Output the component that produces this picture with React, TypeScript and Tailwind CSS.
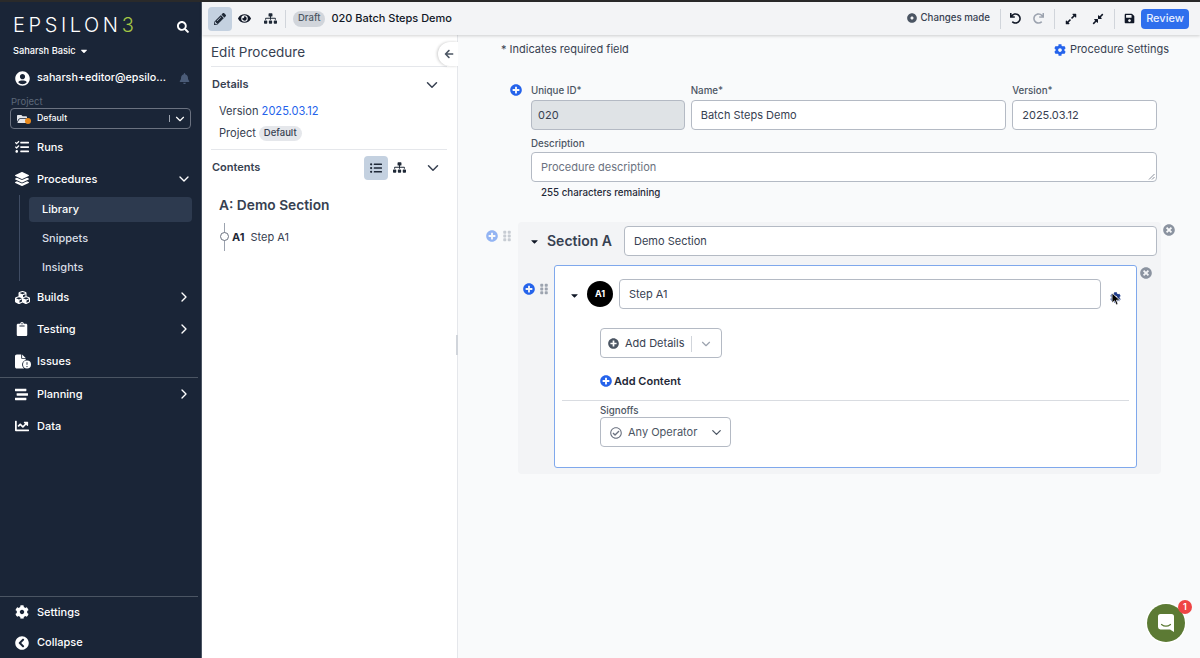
import React from "react";
import { FaSearch, FaCaretDown, FaUserCircle, FaBell, FaFolderOpen, FaTasks, FaLayerGroup, FaCubes, FaClipboard, FaStream, FaChartLine, FaCog, FaChevronCircleLeft, FaPencilAlt, FaEye, FaSitemap, FaDotCircle, FaUndo, FaRedo, FaExpandAlt, FaCompressAlt, FaSave, FaListUl, FaArrowLeft, FaPlusCircle, FaTimesCircle, FaGripVertical, FaRegCheckCircle } from "react-icons/fa";
import { FaFileCircleExclamation } from "react-icons/fa6";
import { FiChevronDown, FiChevronRight } from "react-icons/fi";

function NavRow({ icon, label, chev, h = "h-8" }: { icon: React.ReactNode; label: string; chev?: "down" | "right"; h?: string }) {
  return (
    <div className={`flex ${h} items-center pl-[15px] pr-[9px] text-white`}>
      <span className="flex w-[22px] items-center">{icon}</span>
      <span className="flex-1 text-[11px] font-medium">{label}</span>
      {chev === "down" && <FiChevronDown className="h-[16px] w-[16px]" />}
      {chev === "right" && <FiChevronRight className="h-[16px] w-[16px]" />}
    </div>
  );
}

function Sidebar() {
  return (
    <aside className="flex w-[202px] shrink-0 flex-col border-r border-[#4b5563] bg-[#1a2537] text-white">
      <div className="flex h-[36px] items-end justify-between pl-[13px] pr-[12px]">
        <span className="text-[20px] font-light leading-[25px] tracking-[3.6px]">
          EPSILON<span className="text-[#a3c644]">3</span>
        </span>
        <FaSearch className="mb-[5px] h-[12px] w-[12px]" />
      </div>
      <div className="mt-[5px] flex h-[16px] items-center gap-[3px] pl-[13px] text-[9.25px] font-medium">
        Saharsh Basic <FaCaretDown className="h-[10px] w-[10px]" />
      </div>
      <div className="mt-[3px] flex h-[32px] items-center pl-[15px] pr-[11px]">
        <FaUserCircle className="h-[15px] w-[15px]" />
        <span className="ml-[7px] flex-1 text-[10.75px] font-medium">saharsh+editor@epsilo...</span>
        <FaBell className="h-[11px] w-[11px] text-[#4b5c78]" />
      </div>
      <div className="mt-[2px] pl-[11px] text-[9.5px] leading-[12px] text-[#5c6778]">Project</div>
      <div className="mx-[10px] flex h-[21px] items-center rounded border border-[#6b7280] pl-[6px] pr-[3px]">
        <span className="relative flex w-[20px] items-center">
          <FaFolderOpen className="h-[12px] w-[12px] text-[#e5e7eb]" />
          <span className="absolute left-[8px] top-[5px] h-[6px] w-[6px] rounded-full bg-[#ea8a1c]" />
        </span>
        <span className="flex-1 text-[8.75px] font-medium">Default</span>
        <span className="mr-[3px] h-[7px] w-px bg-[#9ca3af]" />
        <FiChevronDown className="h-[14px] w-[14px]" />
      </div>
      <div className="mt-[2px]">
        <NavRow icon={<FaTasks className="h-[14px] w-[14px]" />} label="Runs" />
        <NavRow icon={<FaLayerGroup className="h-[14px] w-[14px]" />} label="Procedures" chev="down" />
        <div className="ml-[19px] h-[86px] border-l border-[#3f4c63] pl-[9px] pr-[9px] pt-[2px] text-[11px] font-medium text-[#d8dde5]">
          <div className="flex h-[25px] items-center rounded bg-[#2d3a4f] pl-[13px] text-white">Library</div>
          <div className="flex h-[32px] items-center pl-[13px]">Snippets</div>
          <div className="flex h-[27px] items-center pl-[13px]">Insights</div>
        </div>
        <NavRow icon={<FaCubes className="h-[15px] w-[15px]" />} label="Builds" chev="right" />
        <NavRow icon={<FaClipboard className="ml-[1px] h-[14px] w-[12px]" />} label="Testing" chev="right" />
        <NavRow icon={<FaFileCircleExclamation className="h-[15px] w-[16px]" />} label="Issues" />
        <div className="mr-[3px] h-px bg-[#4b5563]" />
        <NavRow icon={<FaStream className="h-[13px] w-[13px]" />} label="Planning" chev="right" />
        <NavRow icon={<FaChartLine className="h-[14px] w-[14px]" />} label="Data" />
      </div>
      <div className="mt-auto mr-[3px] h-px bg-[#4b5563]" />
      <NavRow h="h-[30px]" icon={<FaCog className="h-[14px] w-[14px]" />} label="Settings" />
      <NavRow h="h-[31px]" icon={<FaChevronCircleLeft className="h-[14px] w-[14px]" />} label="Collapse" />
    </aside>
  );
}

function TopBar() {
  return (
    <header className="relative z-10 flex h-[33px] shrink-0 items-center bg-[#f3f4f6] pl-[6px] pr-[11px] text-[#111827] shadow-[0_1px_3px_rgba(0,0,0,0.18)]">
      <span className="flex h-[24px] w-[24px] items-center justify-center rounded bg-[#c4d1e0]">
        <FaPencilAlt className="h-[12px] w-[12px] text-[#1f2937]" />
      </span>
      <span className="ml-[4px] flex w-[16px] justify-center"><FaEye className="h-[13px] w-[13px]" /></span>
      <span className="ml-[10px] flex w-[16px] justify-center"><FaSitemap className="h-[13px] w-[13px] text-[#1f2937]" /></span>
      <span className="ml-[7px] h-[18px] w-px bg-[#d1d5db]" />
      <span className="ml-[7px] flex h-[16px] items-center rounded-full bg-[#d1d5db] px-[5px] text-[9.5px] font-medium text-[#4b5563]">Draft</span>
      <span className="ml-[6px] text-[11px] font-medium">020 Batch Steps Demo</span>
      <span className="ml-auto flex items-center gap-[3px] text-[9.7px] font-medium text-[#374151]">
        <FaDotCircle className="h-[10px] w-[10px] text-[#4b5563]" /> Changes made
      </span>
      <span className="ml-[10px] h-[20px] w-px bg-[#d1d5db]" />
      <FaUndo className="ml-[9px] h-[11px] w-[11px] text-[#111827]" />
      <FaRedo className="ml-[12px] h-[11px] w-[11px] text-[#9ca3af]" />
      <span className="ml-[10px] h-[20px] w-px bg-[#d1d5db]" />
      <FaExpandAlt className="ml-[10px] h-[12px] w-[12px] text-[#111827]" />
      <FaCompressAlt className="ml-[15px] h-[12px] w-[12px] text-[#111827]" />
      <span className="ml-[10px] h-[20px] w-px bg-[#d1d5db]" />
      <FaSave className="ml-[9px] h-[11px] w-[11px] text-[#111827]" />
      <span className="ml-[6px] flex h-[20px] w-[48px] items-center justify-center rounded bg-[#2f6fed] text-[11px] font-medium text-[#e8f0ff]">Review</span>
    </header>
  );
}

function EditPanel() {
  return (
    <section className="relative flex w-[256px] shrink-0 flex-col border-r border-[#e5e7eb] bg-white pl-[9px] pr-[10px] text-[#1f2937]">
      <div className="flex h-[32px] items-end border-b border-[#e5e7eb] pb-[4px] text-[13.5px] leading-[20px] text-[#374151]">Edit Procedure</div>
      <div className="flex h-[35px] items-center justify-between pl-[1px] pr-[6px] text-[11px] font-semibold text-[#374151]">
        Details <FiChevronDown className="h-[18px] w-[18px] text-[#374151]" />
      </div>
      <div className="pl-[8px] text-[11.1px] leading-[22px] text-[#374151]">
        <div className="mt-[-2px]">Version <span className="text-[#2563eb]">2025.03.12</span></div>
        <div className="flex items-center gap-[3px]">
          Project <span className="flex h-[15px] items-center rounded-full bg-[#e5e7eb] px-[5px] text-[9.5px] font-medium">Default</span>
        </div>
      </div>
      <div className="mt-[5px] h-px bg-[#e5e7eb]" />
      <div className="flex h-[35px] items-center pl-[1px] pr-[5px] text-[11px] font-semibold text-[#374151]">
        <span className="flex-1">Contents</span>
        <span className="flex h-[24px] w-[24px] items-center justify-center rounded bg-[#c4d1e0]"><FaListUl className="h-[12px] w-[12px] text-[#1f2937]" /></span>
        <span className="ml-[5px] flex w-[13px] justify-center"><FaSitemap className="h-[13px] w-[13px] text-[#1f2937]" /></span>
        <FiChevronDown className="ml-[18px] h-[18px] w-[18px]" />
      </div>
      <div className="mt-[10px] pl-[8px] text-[13.75px] font-semibold leading-[20px] text-[#374151]">A: Demo Section</div>
      <div className="relative mt-[8px] flex h-[28px] items-center pl-[21px] text-[11px] text-[#374151]">
        <span className="absolute left-[13px] top-0 h-[28px] w-px bg-[#9ca3af]" />
        <span className="absolute left-[9px] top-[9px] h-[9px] w-[9px] rounded-full border border-[#6b7280] bg-white" />
        <b className="mr-[6px] font-bold text-[#1f2937]">A1</b> Step A1
      </div>
      <span className="absolute right-[-1px] top-[7px] flex h-[24px] w-[20px] items-center justify-center rounded-l-full bg-white shadow-[-1px_0_3px_rgba(0,0,0,0.2)]">
        <FaArrowLeft className="ml-[2px] h-[10px] w-[10px] text-[#4b5563]" />
      </span>
      <span className="absolute right-[-2px] top-[300px] h-[20px] w-[3px] bg-[#d1d5db]" />
    </section>
  );
}

const inputCls = "flex h-[30px] items-center rounded border border-[#b4bac4] bg-white px-[9px] pt-[1px] text-[11px] text-[#374151]";

function Plus({ faded }: { faded?: boolean }) {
  return <FaPlusCircle className={`h-[12px] w-[12px] ${faded ? "text-[#93b4f3]" : "text-[#2563eb]"}`} />;
}

function MainPane() {
  return (
    <main className="relative min-w-0 flex-1 bg-[#f9fafb]">
      <div className="flex h-[28px] items-center justify-between pl-[43px] pr-[31px] pt-[1px] text-[11px] text-[#374151]">
        <span>* Indicates required field</span>
        <span className="flex items-center gap-[4px]"><FaCog className="h-[12px] w-[12px] text-[#2563eb]" /> Procedure Settings</span>
      </div>
      <div className="relative ml-[73px] mt-[22px] w-[626px]">
        <span className="absolute left-[-21px] top-[-1px]"><Plus /></span>
        <div className="flex gap-[6px]">
          <div className="w-[154px]">
            <div className="mb-[3px] text-[9.75px] font-medium leading-[12px] text-[#4b5563]">Unique ID*</div>
            <div className={`${inputCls} !bg-[#dfe3e6] !px-[6px]`}>020</div>
          </div>
          <div className="w-[316px]">
            <div className="mb-[3px] text-[9.75px] font-medium leading-[12px] text-[#4b5563]">Name*</div>
            <div className={inputCls}>Batch Steps Demo</div>
          </div>
          <div className="w-[145px]">
            <div className="mb-[3px] text-[9.75px] font-medium leading-[12px] text-[#4b5563]">Version*</div>
            <div className={inputCls}>2025.03.12</div>
          </div>
        </div>
        <div className="mb-[2px] mt-[8px] text-[9.75px] font-medium leading-[12px] text-[#4b5563]">Description</div>
        <div className={`${inputCls} relative !text-[#6b7280]`}>Procedure description
          <svg className="absolute bottom-[1px] right-[1px] h-[7px] w-[7px]" viewBox="0 0 7 7"><path d="M6.5 1 1 6.5M6.5 4 4 6.5" stroke="#6b7280" strokeWidth="0.8" /></svg>
        </div>
        <div className="mt-[5px] pl-[10px] text-[9.75px] font-medium leading-[12px] text-[#1f2937]">255 characters remaining</div>
      </div>

      <div className="relative ml-[60px] mt-[23px] w-[643px] rounded bg-[#f3f4f6] pb-[6px] pt-[4px]">
        <span className="absolute left-[-32px] top-[8px] flex items-center gap-[4px]">
          <Plus faded /><FaGripVertical className="h-[12px] w-[10px] text-[#c7ccd3]" />
        </span>
        <FaTimesCircle className="absolute right-[-14px] top-[2px] h-[12px] w-[12px] text-[#8b93a0]" />
        <div className="flex items-center pr-[4px]">
          <FaCaretDown className="ml-[11px] h-[11px] w-[11px] text-[#111827]" />
          <span className="ml-[7px] w-[77px] pb-[1px] text-[14px] font-semibold text-[#374151]">Section A</span>
          <div className={`${inputCls} flex-1`}>Demo Section</div>
        </div>
        <div className="relative ml-[36px] mt-[9px] h-[203px] w-[583px] rounded-[3px] border-[1.5px] border-[#7fa8ec] bg-white pt-[13px]">
          <span className="absolute left-[-32px] top-[17px] flex items-center gap-[4px]">
            <Plus /><FaGripVertical className="h-[12px] w-[10px] text-[#9ca3af]" />
          </span>
          <FaTimesCircle className="absolute right-[-16px] top-[1px] h-[12px] w-[12px] text-[#8b93a0]" />
          <div className="flex items-center">
            <FaCaretDown className="ml-[14px] mt-[2px] h-[11px] w-[11px] text-[#111827]" />
            <span className="ml-[7px] flex h-[26px] w-[26px] items-center justify-center rounded-full bg-black text-[9px] font-bold text-white">A1</span>
            <div className={`${inputCls} ml-[6px] w-[482px]`}>Step A1</div>
            <span className="relative ml-[9px] mt-[6px]">
              <FaCog className="h-[11px] w-[11px] text-[#1e3a8a]" />
              <svg className="absolute left-[1px] top-[0px] h-[14px] w-[10px]" viewBox="0 0 10 14"><path d="M1 1v10l2.6-2.2L5.3 13l1.8-.8-1.7-4H9z" fill="#000" stroke="#fff" strokeWidth="0.8" /></svg>
            </span>
          </div>
          <div className="ml-[45px] mt-[19px] flex h-[30px] w-[122px] items-center rounded border border-[#b4bac4] pl-[7px] pt-[1px] text-[11px] text-[#374151]">
            <FaPlusCircle className="h-[11px] w-[11px] text-[#4b5563]" />
            <span className="ml-[6px]">Add Details</span>
            <span className="ml-[7px] h-[16px] w-px bg-[#d1d5db]" />
            <FiChevronDown className="ml-[7px] h-[14px] w-[14px] text-[#9ca3af]" />
          </div>
          <div className="ml-[45px] mt-[15px] flex h-[16px] items-center gap-[2px] text-[11px] font-semibold text-[#1f2937]">
            <Plus /> Add Content
          </div>
          <div className="ml-[7px] mt-[11px] h-px w-[567px] bg-[#d9dce1]" />
          <div className="ml-[45px] mt-[3px] text-[9.75px] font-medium leading-[13px] text-[#4b5563]">Signoffs</div>
          <div className="ml-[45px] flex h-[30px] w-[131px] items-center rounded border border-[#b4bac4] pl-[9px] pt-[1px] text-[11px] text-[#4b5563]">
            <FaRegCheckCircle className="h-[12px] w-[12px] text-[#6b7280]" />
            <span className="ml-[6px] flex-1">Any Operator</span>
            <FiChevronDown className="mr-[6px] h-[15px] w-[15px] text-[#4b5563]" />
          </div>
        </div>
      </div>

      <div className="absolute bottom-[16px] right-[15px] flex h-[38px] w-[38px] items-center justify-center rounded-full bg-[#5c7a34] shadow-[0_0_0_1.5px_#fff]">
        <svg className="h-[18px] w-[16px]" viewBox="0 0 16 18"><path d="M2.5 0h11A2.5 2.5 0 0 1 16 2.5V18l-4-2.6H2.5A2.5 2.5 0 0 1 0 13V2.5A2.5 2.5 0 0 1 2.5 0z" fill="#fff" /><path d="M3.5 10.5c2.6 2 6.4 2 9 0" fill="none" stroke="#5c7a34" strokeWidth="1.2" strokeLinecap="round" /></svg>
        <span className="absolute right-[-7px] top-[-4px] flex h-[14px] w-[14px] items-center justify-center rounded-full bg-[#ef4444] text-[9px] font-semibold text-white">1</span>
      </div>
    </main>
  );
}

export default function App() {
  return (
    <div className="flex h-[658px] w-[1200px] overflow-hidden bg-[#2a2a2a] pt-[2px] [font-family:Inter,sans-serif]">
      <Sidebar />
      <div className="flex min-w-0 flex-1 flex-col">
        <TopBar />
        <div className="flex min-h-0 flex-1">
          <EditPanel />
          <MainPane />
        </div>
      </div>
    </div>
  );
}
